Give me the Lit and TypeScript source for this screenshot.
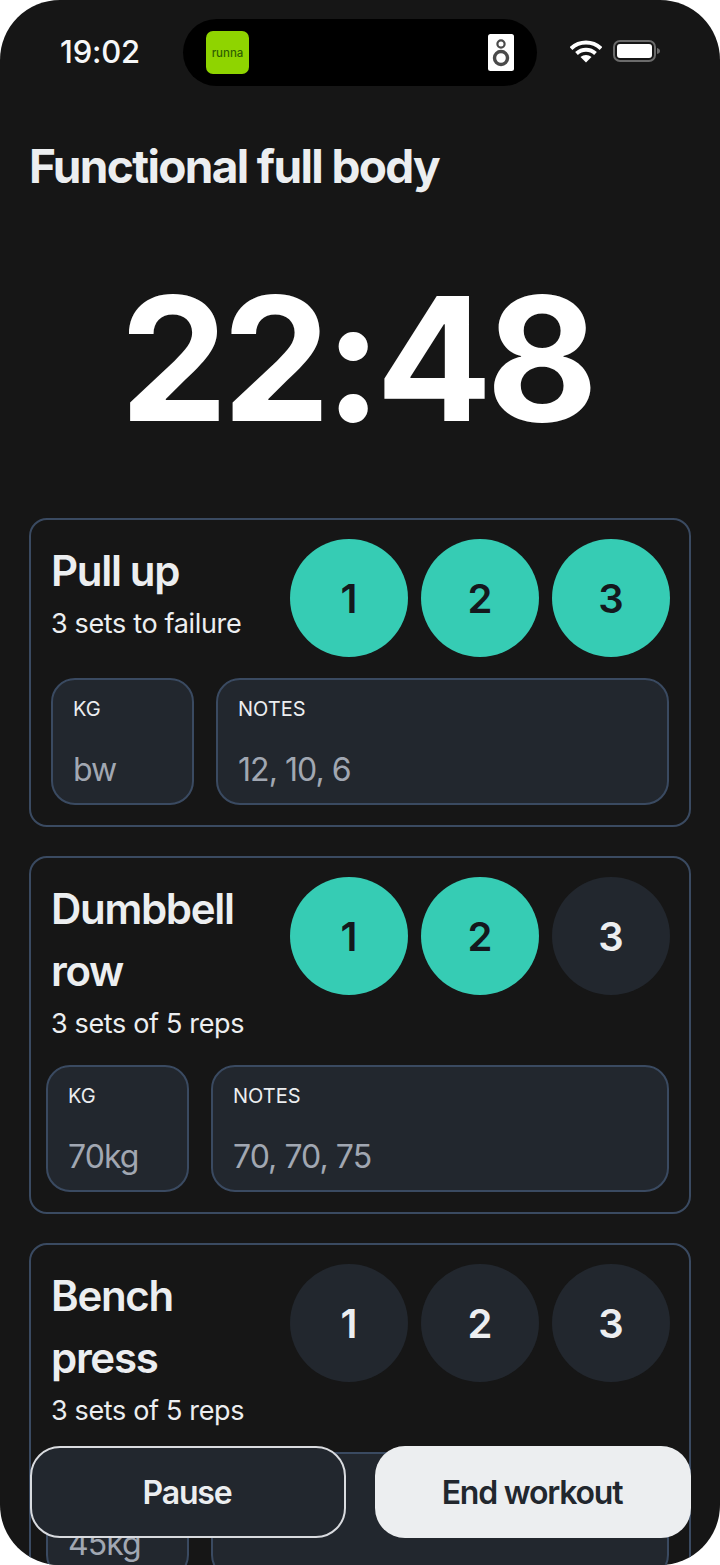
import { LitElement, html, css } from "lit";
import { customElement } from "lit/decorators.js";

type Ex = { name: string[]; sub: string; done: number; kg: string; notes: string; tight: boolean };

const EXERCISES: Ex[] = [
  { name: ["Pull up"], sub: "3 sets to failure", done: 3, kg: "bw", notes: "12, 10, 6", tight: false },
  { name: ["Dumbbell", "row"], sub: "3 sets of 5 reps", done: 2, kg: "70kg", notes: "70, 70, 75", tight: true },
  { name: ["Bench", "press"], sub: "3 sets of 5 reps", done: 0, kg: "45kg", notes: "", tight: true },
];

@customElement("app-root")
export class AppRoot extends LitElement {
  static styles = css`
    :host { display: block; width: 720px; height: 1565px; background: #fff; overflow: hidden; font-family: Inter, "Liberation Sans", sans-serif; }
    .screen { position: relative; width: 720px; height: 1565px; background: #161616; border-radius: 60px; overflow: hidden; color: #eceef0; }
    .status { display: flex; align-items: center; height: 67px; padding-top: 19px; position: relative; }
    .time { width: 183px; padding: 0 0 2px 60px; box-sizing: border-box; font-size: 31px; font-weight: 500; color: #f6f7f8; letter-spacing: -0.2px; }
    .island { width: 354px; height: 67px; background: #000; border-radius: 34px; display: flex; align-items: center; justify-content: space-between; padding: 0 23px; box-sizing: border-box; }
    .logo { width: 43px; height: 43px; background: #8fd400; border-radius: 7px; display: flex; align-items: center; justify-content: center; font-size: 11.5px; color: #2f5f00; font-weight: 500; }
    .speaker { display: block; }
    .sys { display: flex; align-items: center; margin: 0 0 3px 33px; gap: 11px; }
    .sys svg { display: block; }
    h1 { margin: 50px 0 0 29px; font-size: 46px; line-height: 60px; font-weight: 650; letter-spacing: -1.65px; color: #eceef0; }
    .timer { margin-top: 52px; padding-right: 8px; height: 220px; line-height: 220px; text-align: center; font-size: 172px; font-weight: 650; color: #fff; letter-spacing: -6px; }
    .cards { margin: 50px 29px 0 29px; display: flex; flex-direction: column; gap: 29px; }
    .card { border: 2px solid #3a4a61; border-radius: 18px; padding: 19px 19px 20px 20px; }
    .top { display: flex; justify-content: space-between; align-items: flex-start; }
    .name { margin: 0; padding-top: 1px; font-size: 42px; line-height: 62px; font-weight: 600; letter-spacing: -1.3px; color: #eceef0; }
    .sub { font-size: 27px; line-height: 41px; padding-top: 1px; color: #eceef0; letter-spacing: -0.35px; }
    .sets { display: flex; gap: 13px; flex: none; }
    .set { width: 118px; height: 118px; border-radius: 50%; background: #22272e; color: #eceef0; display: flex; align-items: center; justify-content: center; font-size: 40px; font-weight: 600; }
    .set.on { background: #36ccb4; color: #14181d; }
    .row { display: flex; gap: 22px; margin: 21px 1px 0 0; }
    .row.tight { margin-left: -5px; }
    .field { height: 127px; box-sizing: border-box; background: #22272e; border: 2px solid #3a4a61; border-radius: 24px; padding: 17px 20px 0; }
    .field.kg { width: 143px; flex: none; }
    .field.notes { flex: 1; }
    .label { font-size: 20px; line-height: 25px; color: #eceef0; }
    .value { font-size: 32px; line-height: 40px; margin-top: 28px; color: #a1a7b2; letter-spacing: -0.95px; }
    .actions { position: absolute; left: 30px; top: 1446px; width: 661px; display: flex; gap: 29px; }
    .btn { flex: 0 0 316px; height: 92px; box-sizing: border-box; border-radius: 30px; display: flex; align-items: center; justify-content: center; font-size: 32px; font-weight: 600; letter-spacing: -1.2px; padding: 1px 2px 0 0; }
    .btn.pause { background: #22272e; border: 2px solid #d9dbdf; color: #eceef0; }
    .btn.end { background: #eceef0; color: #22272e; }
  `;

  private card(e: Ex) {
    return html`<section class="card">
      <div class="top">
        <div>
          <h2 class="name">${e.name.map((l, i) => html`${i ? html`<br />` : ""}${l}`)}</h2>
          <div class="sub">${e.sub}</div>
        </div>
        <div class="sets">
          ${[1, 2, 3].map((n) => html`<div class="set ${n <= e.done ? "on" : ""}">${n}</div>`)}
        </div>
      </div>
      <div class="row ${e.tight ? "tight" : ""}">
        <div class="field kg"><div class="label">KG</div><div class="value">${e.kg}</div></div>
        <div class="field notes"><div class="label">NOTES</div><div class="value">${e.notes}</div></div>
      </div>
    </section>`;
  }

  render() {
    return html`<div class="screen">
      <div class="status">
        <div class="time">19:02</div>
        <div class="island">
          <div class="logo">runna</div>
          <svg class="speaker" width="26" height="37" viewBox="0 0 26 37">
            <rect width="26" height="37" rx="2.5" fill="#fff" />
            <circle cx="13" cy="10" r="3.6" fill="none" stroke="#4a4a4a" stroke-width="2.2" />
            <circle cx="13" cy="24" r="6.5" fill="none" stroke="#4a4a4a" stroke-width="3.4" />
          </svg>
        </div>
        <div class="sys">
          <svg width="32" height="24" viewBox="0 0 32 24">
            <path d="M1 9.500C9.500 1.500 22.500 1.500 31 9.500" fill="none" stroke="#fff" stroke-width="4" />
            <path d="M6.500 14.500C12 9.500 20 9.500 25.500 14.500" fill="none" stroke="#fff" stroke-width="4" />
            <path d="M10.500 18C13.500 15.200 18.500 15.200 21.500 18L16 23.500Z" fill="#fff" />
          </svg>
          <svg width="47" height="22" viewBox="0 0 47 22">
            <rect x="1" y="1" width="41" height="20" rx="6" fill="none" stroke="#6b6b6b" stroke-width="2" />
            <rect x="4" y="4" width="35" height="14" rx="3" fill="#fff" />
            <path d="M44 8c2 .5 3 1.500 3 3s-1 2.500-3 3Z" fill="#6b6b6b" />
          </svg>
        </div>
      </div>
      <h1>Functional full body</h1>
      <div class="timer">22:48</div>
      <div class="cards">${EXERCISES.map((e) => this.card(e))}</div>
      <div class="actions">
        <div class="btn pause">Pause</div>
        <div class="btn end">End workout</div>
      </div>
    </div>`;
  }
}
